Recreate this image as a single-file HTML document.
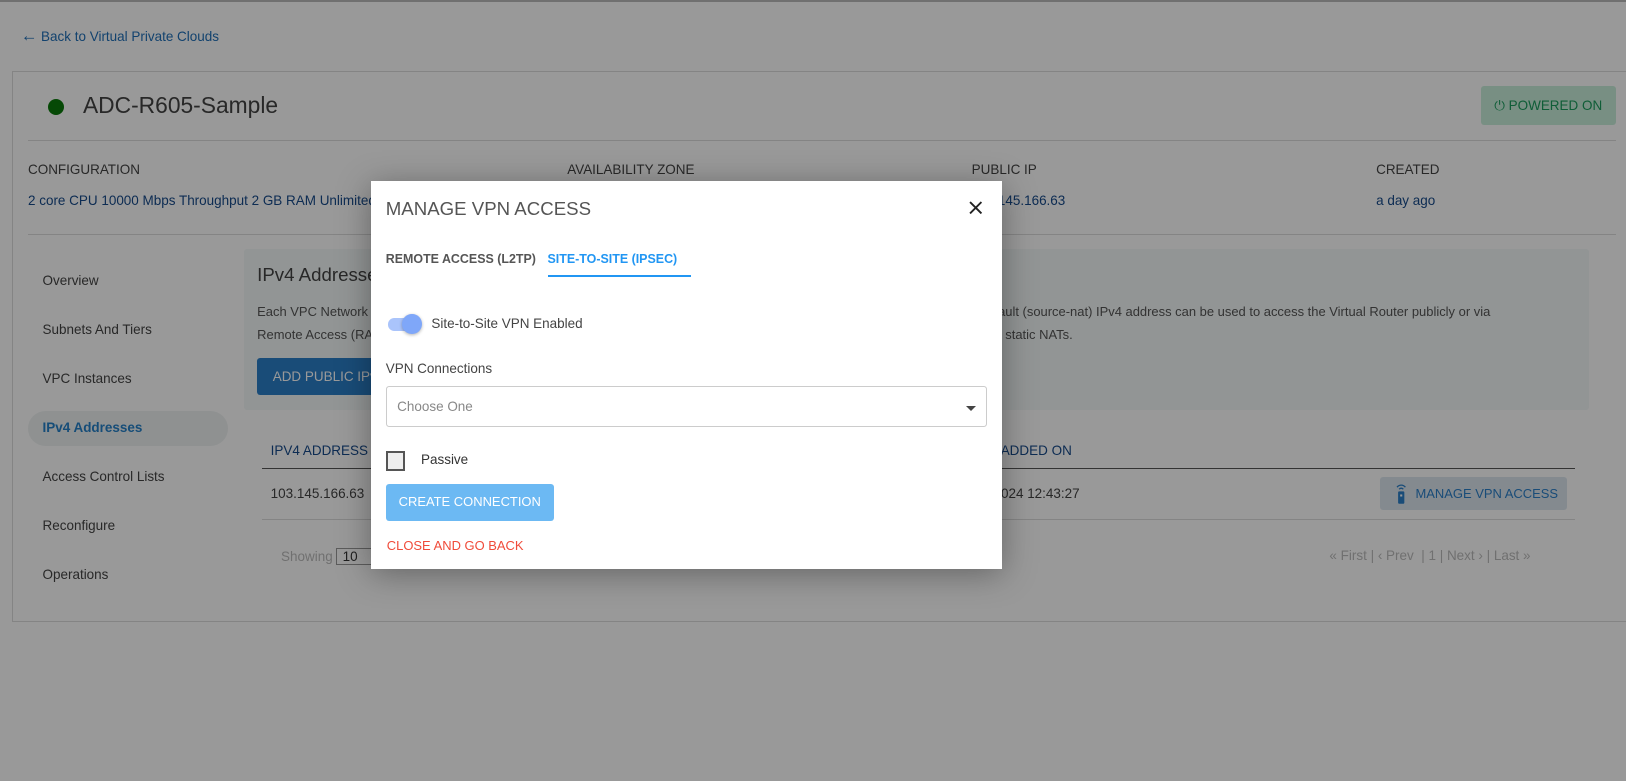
<!DOCTYPE html>
<html><head><meta charset="utf-8"><style>
html,body{margin:0;padding:0;overflow:hidden}
body{width:1568px;height:753px;zoom:1.037;background:#fff;font-family:"Liberation Sans",sans-serif;position:relative;color:#333}
.a{position:absolute;white-space:nowrap}
.ov{position:absolute;left:0;top:0;width:1568px;height:760px;background:rgba(0,0,0,.4)}
.blue{color:#1f6fb8}
.m{position:absolute;left:358px;top:175px;width:608px;height:374px;background:#fff;box-shadow:0 5px 30px rgba(0,0,0,.35)}
</style></head><body>
<div class="a" style="left:0;top:0;width:1568px;height:2px;background:#bbb"></div>
<div class="a blue" style="left:20px;top:25px;font-size:13px"><span style="font-size:16px">&#8592;</span> Back to Virtual Private Clouds</div>
<div class="a" style="left:12px;top:68px;width:1560px;height:532px;border:1px solid #ddd;box-sizing:border-box"></div>
<div class="a" style="left:46px;top:95px;width:16px;height:16px;border-radius:50%;background:#0a7a0a"></div>
<div class="a" style="left:80px;top:89px;font-size:22px;color:#444">ADC-R605-Sample</div>
<div class="a" style="left:1428px;top:83px;width:130px;height:38px;background:#c9efdb;border-radius:3px;color:#1a9b5c;font-size:13px;line-height:38px;text-align:center">&#x23FB; POWERED ON</div>
<div class="a" style="left:27px;top:135px;width:1531px;height:1px;background:#ddd"></div>
<div class="a" style="left:27px;top:156px;font-size:13px;color:#444">CONFIGURATION</div>
<div class="a" style="left:547px;top:156px;font-size:13px;color:#444">AVAILABILITY ZONE</div>
<div class="a" style="left:937px;top:156px;font-size:13px;color:#444">PUBLIC IP</div>
<div class="a" style="left:1327px;top:156px;font-size:13px;color:#444">CREATED</div>
<div class="a blue" style="left:27px;top:186px;font-size:13px;color:#164a8a">2 core CPU 10000 Mbps Throughput 2 GB RAM Unlimited</div>
<div class="a" style="left:937px;top:186px;font-size:13px;color:#164a8a">103.145.166.63</div>
<div class="a" style="left:1327px;top:186px;font-size:13px;color:#164a8a">a day ago</div>
<div class="a" style="left:27px;top:226px;width:1531px;height:1px;background:#ddd"></div>
<div class="a" style="left:27px;top:396px;width:193px;height:34px;border-radius:17px;background:#eef2f2"></div>
<div class="a" style="left:41px;top:248px;font-size:13px;line-height:47.2px;color:#444">Overview<br>Subnets And Tiers<br>VPC Instances<br><b style="color:#2680c8;font-weight:600">IPv4 Addresses</b><br>Access Control Lists<br>Reconfigure<br>Operations</div>
<div class="a" style="left:235px;top:240px;width:1297px;height:155px;background:#f3f8f8;border-radius:3px"></div>
<div class="a" style="left:248px;top:255px;font-size:18px;color:#444">IPv4 Addresses</div>
<div class="a" style="left:248px;top:290px;width:120px;overflow:hidden;font-size:12.5px;line-height:22px;color:#555">Each VPC Network has<br>Remote Access (RA) VPN</div>
<div class="a" style="left:959px;top:290px;font-size:12.5px;line-height:22px;color:#555">fault (source-nat) IPv4 address can be used to access the Virtual Router publicly or via<br>d static NATs.</div>
<div class="a" style="left:248px;top:345px;width:170px;height:36px;background:#2a7fc9;border-radius:3px;color:#fff;font-size:13px;line-height:36px;padding-left:15px;box-sizing:border-box">ADD PUBLIC IPv4</div>
<div class="a" style="left:261px;top:427px;font-size:13px;color:#164a8a">IPV4 ADDRESS</div>
<div class="a" style="left:965px;top:427px;font-size:13px;color:#164a8a">ADDED ON</div>
<div class="a" style="left:253px;top:451px;width:1266px;height:1px;background:#555"></div>
<div class="a" style="left:261px;top:469px;font-size:13px;color:#444">103.145.166.63</div>
<div class="a" style="left:940px;top:469px;font-size:13px;color:#444">04/2024 12:43:27</div>
<div class="a" style="left:1331px;top:460px;width:180px;height:32px;background:#dde6ef;border-radius:3px;color:#2a7fc9;font-size:12.5px;line-height:32px;padding-left:34px;box-sizing:border-box">MANAGE VPN ACCESS</div>
<svg class="a" style="left:1345px;top:465px" width="12" height="22" viewBox="0 0 12 22"><path d="M2 5a5 5 0 0 1 8 0M4 7a2.5 2.5 0 0 1 4 0" stroke="#2a7fc9" stroke-width="1.3" fill="none"/><rect x="3" y="9" width="6" height="12" rx="1" fill="#2a7fc9"/><rect x="5" y="12" width="2" height="2" fill="#fff"/></svg>
<div class="a" style="left:253px;top:500px;width:1266px;height:1px;background:#ddd"></div>
<div class="a" style="left:271px;top:528px;font-size:13px;color:#bbb">Showing <span style="display:inline-block;border:1px solid #999;color:#333;padding:0 14px 0 5px">10</span></div>
<div class="a" style="left:1282px;top:528px;font-size:13px;color:#bbb">« First | ‹ Prev &nbsp;| 1 | Next › | Last »</div>
<div class="ov"></div>
<div class="m">
<div class="a" style="left:14px;top:16px;font-size:18px;color:#555">MANAGE VPN ACCESS</div>
<svg class="a" style="left:576px;top:19px" width="13" height="13" viewBox="0 0 13 13"><path d="M1 1L12 12M12 1L1 12" stroke="#222" stroke-width="1.8"/></svg>
<div class="a" style="left:14px;top:68px;font-size:12px;font-weight:bold;color:#555">REMOTE ACCESS (L2TP)</div>
<div class="a" style="left:170px;top:68px;font-size:12px;font-weight:bold;color:#2196f3">SITE-TO-SITE (IPSEC)</div>
<div class="a" style="left:170px;top:90px;width:138px;height:2px;background:#2196f3"></div>
<div class="a" style="left:16px;top:132px;width:30px;height:12px;border-radius:6px;background:#aac4fb"></div>
<div class="a" style="left:30px;top:128px;width:19px;height:19px;border-radius:50%;background:#7fa7f9;box-shadow:0 1px 3px rgba(0,0,0,.3)"></div>
<div class="a" style="left:58px;top:130px;font-size:13px;color:#444">Site-to-Site VPN Enabled</div>
<div class="a" style="left:14px;top:173px;font-size:13px;color:#444">VPN Connections</div>
<div class="a" style="left:14px;top:197px;width:580px;height:40px;border:1px solid #ccc;border-radius:3px;box-sizing:border-box"></div>
<div class="a" style="left:25px;top:210px;font-size:13px;color:#888">Choose One</div>
<div class="a" style="left:574px;top:217px;border-left:5px solid transparent;border-right:5px solid transparent;border-top:5px solid #444"></div>
<div class="a" style="left:14px;top:260px;width:19px;height:19px;border:2px solid #555;background:#eee;box-sizing:border-box"></div>
<div class="a" style="left:48px;top:261px;font-size:13px;color:#333">Passive</div>
<div class="a" style="left:14px;top:292px;width:162px;height:35px;background:#6cb9f3;border-radius:3px;color:#fff;font-size:12.5px;line-height:35px;text-align:center">CREATE CONNECTION</div>
<div class="a" style="left:15px;top:344px;font-size:12.5px;color:#f04b3a">CLOSE AND GO BACK</div>
</div>
</body></html>
